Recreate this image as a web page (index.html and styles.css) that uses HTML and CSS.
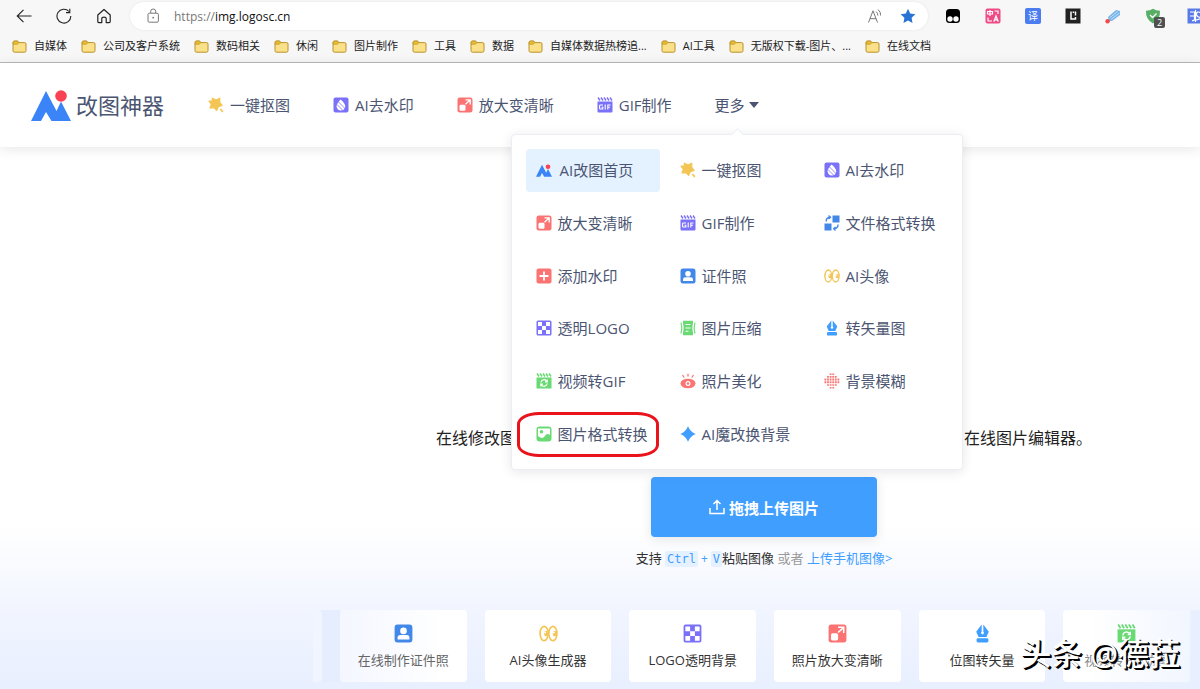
FILE: index.html
```html
<!DOCTYPE html>
<html lang="zh-CN">
<head>
<meta charset="utf-8">
<title>改图神器</title>
<link rel="stylesheet" href="styles.css">
</head>
<body>
<svg class="sprite" aria-hidden="true">
  <symbol id="folder" viewBox="0 0 15 13"><path d="M1 2.6Q1 1 2.5 1H5.4L7 2.6H12.6Q14 2.6 14 4V10.6Q14 12.2 12.5 12.2H2.5Q1 12.2 1 10.6Z" fill="#fbe08a" stroke="#b8922a"/><path d="M1.2 4.2H5.2L7 2.6L5.6 1.2H2.6Q1.2 1.2 1.2 2.6Z" fill="#e8bd2e" stroke="#b8922a" stroke-width=".7"/></symbol>
  <symbol id="logo" viewBox="0 0 40 31"><path d="M0 31 15 1 25.500 21 30 11.500 40 31H20.500L15 22 10 31Z" fill="#3a84f7"/><circle cx="30" cy="6" r="5.800" fill="#fb4254"/></symbol>
  <symbol id="magic" viewBox="0 0 16 16"><path d="M4.400 1.200 8 3 11.800 1.200 11.600 5.200 14.200 8.500 10.400 9.600 8.600 13.400 6.200 10.800 2 11 3.400 7.200 1 4.200 4.200 4.200Z" fill="#f3c554" stroke="#f3c554" stroke-width="1.200" stroke-linejoin="round"/><path d="m12.300 12 2.500 2.800" stroke="#f3c554" stroke-width="1.800"/></symbol>
  <symbol id="drop" viewBox="0 0 16 16"><rect x=".5" y=".5" width="15" height="15" rx="2" fill="#7b70f8"/><path d="M7.500 2.500C5 5.500 3.600 7.200 3.600 9.200A4.300 4.300 0 0 0 12.200 9.200C12.200 7 10 4.500 7.500 2.500Z" fill="#fff"/><path d="m5.500 5 7 7M4 7.500l6 6" stroke="#7b70f8" stroke-width=".8"/></symbol>
  <symbol id="enlarge" viewBox="0 0 16 16"><rect x=".5" y=".5" width="15" height="15" rx="2.200" fill="#fb7373"/><rect x="2.500" y="7.800" width="6" height="6" rx="1.400" fill="#fff"/><path d="M8.500 2.800H13.200V7.500M13 3 8.500 7.200" fill="none" stroke="#fff" stroke-width="1.300"/></symbol>
  <symbol id="gif" viewBox="0 0 16 16"><path d="M.5 4.500H15.500V14.500Q15.500 15.500 14.500 15.500H1.500Q.5 15.500 .5 14.500Z" fill="#7b70f8"/><path d="M1 .5 3 3.500M4 .5 6 3.500M7 .5 9 3.500M10 .5 12 3.500M13 .5 15 3.500" stroke="#7b70f8" stroke-width="1.400"/><path d="M6 8H3.300Q2.600 8 2.600 8.700V11.300Q2.600 12 3.300 12H5.800V10.200H4.600M8.200 7.500V12.500M10.800 12.500V8H13.500M10.800 10.200H13" fill="none" stroke="#fff" stroke-width="1.100"/></symbol>
  <symbol id="convert" viewBox="0 0 16 16"><path d="M8.500 .5H15.500V7.500H8.500ZM.5 8.500H7.500V15.500H.5Z" fill="#4288e8"/><path d="M2.200 6.500Q2 2.500 6 2.200M4.500 .6 6.500 2.200 4.500 4M14 9.500Q14 13.500 10.200 13.800M11.500 12 9.700 13.800 11.500 15.400" fill="none" stroke="#4288e8" stroke-width="1.400"/></symbol>
  <symbol id="plus" viewBox="0 0 16 16"><rect x=".5" y=".5" width="15" height="15" rx="2" fill="#fb7373"/><path d="M8 3.500v9M3.500 8h9" stroke="#fff" stroke-width="1.800"/></symbol>
  <symbol id="person" viewBox="0 0 16 16"><rect x=".5" y=".5" width="15" height="15" rx="2.500" fill="#4288e8"/><circle cx="8" cy="5.800" r="2.800" fill="#fff"/><path d="M3 13V11.500Q3 9.300 5.400 9.300H10.600Q13 9.300 13 11.500V13Z" fill="#fff"/></symbol>
  <symbol id="eyes" viewBox="0 0 16 16"><g fill="none" stroke="#f3c554" stroke-width="1.400"><ellipse cx="4.300" cy="8" rx="3.400" ry="6"/><ellipse cx="11.700" cy="8" rx="3.400" ry="6"/></g><ellipse cx="5.900" cy="8" rx="1.600" ry="2.300" fill="#f3c554"/><ellipse cx="13.200" cy="8" rx="1.600" ry="2.300" fill="#f3c554"/><circle cx="5.200" cy="7.200" r=".8" fill="#fff"/><circle cx="12.500" cy="7.200" r=".8" fill="#fff"/></symbol>
  <symbol id="checker" viewBox="0 0 16 16"><rect x=".5" y=".5" width="15" height="15" rx="1.500" fill="#7b70f8"/><path d="M2 2h4v4H2ZM10 2h4v4h-4ZM6 6h4v4H6ZM2 10h4v4H2ZM10 10h4v4h-4Z" fill="#fff"/></symbol>
  <symbol id="compress" viewBox="0 0 16 16"><path d="M3 .8H13V2.500Q11.600 8 13 13.500V15.200H3V13.500Q4.400 8 3 2.500Z" fill="#68d973"/><path d="M5.500 4.500h5M5.500 8h5M5.500 11.200h3" stroke="#fff" stroke-width="1.100"/><path d="M1 2.500Q2.800 8 1 13.500M15 2.500Q13.200 8 15 13.500" fill="none" stroke="#68d973" stroke-width="1.100"/></symbol>
  <symbol id="pen" viewBox="0 0 16 16"><path d="M7.300 .5V6.500A1.200 1.200 0 1 0 8.700 6.500V.5L13.300 6.500 11.300 11H4.700L2.700 6.500Z" fill="#409eff"/><rect x="3" y="12" width="10" height="3.600" rx="1.200" fill="#409eff"/></symbol>
  <symbol id="video" viewBox="0 0 16 16"><path d="M.5 4.500H15.500V15.500H.5Z" fill="#68d973"/><path d="M1 .5 3 3.500M4 .5 6 3.500M7 .5 9 3.500M10 .5 12 3.500M13 .5 15 3.500" stroke="#68d973" stroke-width="1.500"/><path d="M4.800 9.500A3.300 3.300 0 0 1 10.500 7.800M11.200 10.500A3.300 3.300 0 0 1 5.500 12.200M11.200 6.500V8.800H9M4.800 13.500V11.200H7" fill="none" stroke="#fff" stroke-width="1.200"/></symbol>
  <symbol id="eye" viewBox="0 0 16 16"><ellipse cx="8" cy="10.500" rx="7.500" ry="4.800" fill="#fb7373"/><circle cx="8" cy="10.500" r="2.500" fill="#fff"/><circle cx="8" cy="10.500" r="1.200" fill="#fb7373"/><path d="M8 .8V3.500M2.500 2 4.200 4.500M13.500 2 11.800 4.500" stroke="#fb7373" stroke-width="1.300"/></symbol>
  <symbol id="mosaic" viewBox="0 0 16 16"><g stroke="#fb7373" stroke-width="1.600" stroke-dasharray="1.800 .8" fill="none"><path d="M5.700 1.200H10.500"/><path d="M3.100 3.900H13"/><path d="M.5 6.600H16M.5 9.300H16" stroke-width="2"/><path d="M3.100 12H13"/><path d="M5.700 14.700H10.500"/></g></symbol>
  <symbol id="picture" viewBox="0 0 16 16"><rect x=".5" y=".5" width="15" height="15" rx="3" fill="#68d973"/><path d="M2 2.500H14V9Q11 6.500 8.500 10.500Q6.500 13.500 2 10Z" fill="#fff"/><circle cx="5.500" cy="5.800" r="1.800" fill="#68d973"/></symbol>
  <symbol id="spark" viewBox="0 0 16 16"><path d="M8 .3Q10.200 5.800 15.700 8Q10.200 10.200 8 15.700Q5.800 10.200 .3 8Q5.800 5.800 8 .3Z" fill="#409eff"/></symbol>
</svg>

<div class="browser">
  <div class="toolbar">
    <div class="controls">
      <button class="tool" aria-label="返回"><svg viewBox="0 0 16 16"><path d="M15.500 8H1.500M7.500 1.800 1.200 8 7.500 14.200" fill="none" stroke="#222" stroke-width="1.100"/></svg></button>
      <button class="tool" aria-label="刷新"><svg viewBox="0 0 16 16"><path d="M14.800 8A6.900 6.900 0 1 1 13 3.500M13.800 .8V4.600H10" fill="none" stroke="#222" stroke-width="1.100"/></svg></button>
      <button class="tool" aria-label="主页"><svg viewBox="0 0 16 16"><path d="M1.800 7 8 1.500 14.200 7V13.500Q14.200 14.600 13.200 14.600H10.200V10.400Q10.200 9.200 8 9.200T5.800 10.400V14.600H2.800Q1.800 14.600 1.800 13.500Z" fill="none" stroke="#222" stroke-width="1.200" stroke-linejoin="round"/></svg></button>
    </div>
    <div class="address">
      <svg class="lock" viewBox="0 0 14 16"><rect x="2" y="5.200" width="10.400" height="9" rx="1.300" fill="none" stroke="#777"/><path d="M4.700 5V3.200Q4.700 1 7.200 1T9.700 3.200V5" fill="none" stroke="#777"/><circle cx="7.200" cy="9.700" r=".9" fill="#777"/></svg>
      <label class="scheme" for="url">https://</label><input id="url" class="url" type="text" value="img.logosc.cn">
      <button class="tool" aria-label="朗读"><svg viewBox="0 0 16 16"><path d="M1.500 14.500 6 2.800 10.500 14.500M3 10.700H9M9 3.500Q11 5 10.800 7.500M11 1.500Q14 4 13.600 7.500" fill="none" stroke="#777"/></svg></button>
      <button class="tool" aria-label="收藏"><svg viewBox="0 0 16 16"><path d="m8 .8 2.200 4.700 5.200.7-3.800 3.600.9 5.200L8 12.500 3.500 15l.9-5.200L.6 6.200l5.200-.7Z" fill="#2a73d6"/></svg></button>
    </div>
    <div class="extensions">
      <button class="tool" aria-label="脚本"><svg viewBox="0 0 16 16"><rect x="1" y="1" width="14" height="14" rx="3.500" fill="#000"/><circle cx="5" cy="11" r="2.700" fill="#fff"/><circle cx="11" cy="11" r="2.700" fill="#fff"/></svg></button>
      <button class="tool" aria-label="双语翻译"><svg viewBox="0 0 16 16"><rect x=".5" y=".5" width="15" height="15" rx="2" fill="#ed4a86"/><path d="M2.500 3.500H7.500V6H2.500ZM5 2V8M9.500 3H13V6M3 9.500V13H7M8.800 13.800 11 8 13.300 13.800M9.700 11.800H12.500" fill="none" stroke="#fff" stroke-width="1.200"/></svg></button>
      <button class="tool tile">译</button>
      <button class="tool" aria-label="阅读"><svg viewBox="0 0 16 16"><path d="M.5 .5H15.500V15.500H.5Z" fill="#222"/><path d="M6 3.500V11H10.500V9M10.500 3.500V7.500M8.400 3.500V5" fill="none" stroke="#fff" stroke-width="1.500"/></svg></button>
      <button class="tool" aria-label="铅笔"><svg viewBox="0 0 16 16"><path d="m3 9 8-7 4 1v4l-8 6H4Z" fill="#76b4ea"/><path d="m4.500 10 8-6.500M6 11.500 14.500 5" stroke="#d5ebfb" stroke-width=".8"/><circle cx="2.600" cy="13.300" r="2.200" fill="#f24848"/></svg></button>
      <button class="tool guard" aria-label="防护"><svg viewBox="0 0 16 16"><path d="M1 2.800Q5 2.800 8 .8Q11 2.800 15 2.800Q15.500 11.500 8 15.500Q.5 11.500 1 2.800Z" fill="#58ae65"/><path d="m5 7 2.500 2.500 4-4" fill="none" stroke="#fff" stroke-width="1.300"/></svg><span class="count">2</span></button>
      <button class="tool" aria-label="JS"><svg viewBox="0 0 16 16"><path d="M.5 .5H15.500V15.500H.5Z" fill="#587be8"/><path d="M3 4H7.500V11Q7.500 13 5 12.500M3 8H7M13.500 4.500Q9.500 3 9.500 6T13.300 9.500T9 12M8.500 2V14" fill="none" stroke="#fff" stroke-width="1.200"/></svg></button>
    </div>
  </div>
  <nav class="bookmarks" aria-label="书签">
    <a href="#"><svg><use href="#folder"/></svg>自媒体</a>
    <a href="#"><svg><use href="#folder"/></svg>公司及客户系统</a>
    <a href="#"><svg><use href="#folder"/></svg>数码相关</a>
    <a href="#"><svg><use href="#folder"/></svg>休闲</a>
    <a href="#"><svg><use href="#folder"/></svg>图片制作</a>
    <a href="#"><svg><use href="#folder"/></svg>工具</a>
    <a href="#"><svg><use href="#folder"/></svg>数据</a>
    <a href="#"><svg><use href="#folder"/></svg>自媒体数据热榜追...</a>
    <a href="#"><svg><use href="#folder"/></svg>AI工具</a>
    <a href="#"><svg><use href="#folder"/></svg>无版权下载-图片、...</a>
    <a href="#"><svg><use href="#folder"/></svg>在线文档</a>
  </nav>
</div>

<header class="site-header">
  <a class="brand" href="#"><svg><use href="#logo"/></svg>改图神器</a>
  <nav class="main-nav">
    <a class="entry" href="#"><svg><use href="#magic"/></svg>一键抠图</a>
    <a class="entry" href="#"><svg><use href="#drop"/></svg>AI去水印</a>
    <a class="entry" href="#"><svg><use href="#enlarge"/></svg>放大变清晰</a>
    <a class="entry" href="#"><svg><use href="#gif"/></svg>GIF制作</a>
    <div class="more">
      <button class="more-button" aria-expanded="true">更多<span class="caret"></span></button>
      <div class="menu">
        <a class="entry active" href="#"><svg><use href="#logo"/></svg>AI改图首页</a>
        <a class="entry" href="#"><svg><use href="#magic"/></svg>一键抠图</a>
        <a class="entry" href="#"><svg><use href="#drop"/></svg>AI去水印</a>
        <a class="entry" href="#"><svg><use href="#enlarge"/></svg>放大变清晰</a>
        <a class="entry" href="#"><svg><use href="#gif"/></svg>GIF制作</a>
        <a class="entry" href="#"><svg><use href="#convert"/></svg>文件格式转换</a>
        <a class="entry" href="#"><svg><use href="#plus"/></svg>添加水印</a>
        <a class="entry" href="#"><svg><use href="#person"/></svg>证件照</a>
        <a class="entry" href="#"><svg><use href="#eyes"/></svg>AI头像</a>
        <a class="entry" href="#"><svg><use href="#checker"/></svg>透明LOGO</a>
        <a class="entry" href="#"><svg><use href="#compress"/></svg>图片压缩</a>
        <a class="entry" href="#"><svg><use href="#pen"/></svg>转矢量图</a>
        <a class="entry" href="#"><svg><use href="#video"/></svg>视频转GIF</a>
        <a class="entry" href="#"><svg><use href="#eye"/></svg>照片美化</a>
        <a class="entry" href="#"><svg><use href="#mosaic"/></svg>背景模糊</a>
        <a class="entry circled" href="#"><svg><use href="#picture"/></svg>图片格式转换</a>
        <a class="entry" href="#"><svg><use href="#spark"/></svg>AI魔改换背景</a>
      </div>
    </div>
  </nav>
</header>

<main class="hero">
  <div class="center">
    <p class="intro"><span>在线修改图</span><span>在线图片编辑器。</span></p>
    <button class="upload"><svg viewBox="0 0 16 16"><path d="M1 9V14.500H15V9M8 11V1.500M4.500 5 8 1.500 11.500 5" fill="none" stroke="#fff" stroke-width="1.500"/></svg>拖拽上传图片</button>
    <p class="hint">支持 <kbd>Ctrl</kbd><span class="join">+</span><kbd>V</kbd>粘贴图像 <span class="or">或者</span> <a href="#">上传手机图像&gt;</a></p>
  </div>
  <div class="carousel">
    <div class="sliver"></div>
    <div class="cards">
      <a class="card fade-left" href="#"><svg><use href="#person"/></svg>在线制作证件照</a>
      <a class="card" href="#"><svg><use href="#eyes"/></svg>AI头像生成器</a>
      <a class="card" href="#"><svg><use href="#checker"/></svg>LOGO透明背景</a>
      <a class="card" href="#"><svg><use href="#enlarge"/></svg>照片放大变清晰</a>
      <a class="card" href="#"><svg><use href="#pen"/></svg>位图转矢量</a>
      <a class="card fade-right" href="#"><svg><use href="#video"/></svg>视频转GIF动图</a>
    </div>
  </div>
</main>
<div class="watermark">头条 @德菈</div>
</body>
</html>
```
FILE: styles.css
```css
* { box-sizing: border-box; }
body {
  margin: 0;
  min-height: 100vh;
  display: flex;
  flex-direction: column;
  position: relative;
  overflow: hidden;
  background: #fff;
  color: #333;
  font-family: "Open Sans", "Noto Sans CJK SC", sans-serif;
  font-size: 15px;
}
a { color: inherit; text-decoration: none; }
button { border: 0; padding: 0; background: none; font: inherit; color: inherit; }
p { margin: 0; }
.sprite { position: absolute; width: 0; height: 0; }

.browser { background: #f7f7f7; border-bottom: 1px solid #b8b8b8; }
.toolbar { display: flex; align-items: center; height: 32px; overflow: hidden; }
.controls { display: flex; gap: 24px; padding: 0 18px 0 16px; }
.tool { flex: none; width: 16px; height: 16px; position: relative; }
.tool svg { display: block; width: 16px; height: 16px; }
.address {
  flex: 1;
  display: flex;
  align-items: center;
  height: 28px;
  padding: 0 12px 0 16px;
  border-radius: 14px;
  background: #fff;
  box-shadow: 0 0 2px #ddd;
  font-size: 12px;
}
.lock { width: 14px; height: 16px; margin-right: 14px; }
.scheme { color: #777; }
.url { flex: 1; min-width: 0; border: 0; padding: 0; outline: 0; background: none; font: inherit; color: #111; }
.address .tool + .tool { margin-left: 17px; }
.extensions { display: flex; gap: 24px; padding-left: 17px; margin-right: -3px; }
.tile { border-radius: 2px; background: #4c7df0; color: #fff; font-size: 10px; line-height: 16px; }
.count {
  position: absolute;
  left: 9px;
  top: 9px;
  width: 11px;
  height: 11px;
  border-radius: 2px;
  background: #505050;
  color: #fff;
  font-size: 9px;
  line-height: 11px;
}
.guard { margin-right: 2px; }
.bookmarks { display: flex; gap: 14px; height: 30px; padding: 0 12px; align-items: center; font-size: 11px; color: #222; white-space: nowrap; }
.bookmarks a { display: flex; align-items: center; gap: 7px; line-height: 16px; padding-bottom: 2px; }
.bookmarks svg { width: 15px; height: 13px; }

.site-header {
  display: flex;
  align-items: center;
  height: 84px;
  padding-left: 31px;
  color: #4b5572;
  background: #fff;
  box-shadow: 0 2px 12px rgba(0, 0, 0, .1);
  position: relative;
  z-index: 2;
}
.brand { display: flex; align-items: center; gap: 5px; font-size: 22px; line-height: 32px; }
.brand svg { width: 40px; height: 31px; }
.main-nav { display: flex; align-items: center; gap: 43px; margin-left: 44px; }
.entry { display: flex; align-items: center; gap: 6px; line-height: 22px; white-space: nowrap; }
.entry svg { width: 16px; height: 16px; flex: none; }
.more { position: relative; }
.more-button { display: flex; align-items: center; gap: 4px; line-height: 22px; }
.caret { border: 5px solid transparent; border-top: 6px solid #4b5572; border-bottom: 0; }
.menu {
  position: absolute;
  top: 40px;
  left: 50%;
  transform: translateX(-50%);
  display: grid;
  grid-template-columns: repeat(3, 134px);
  grid-auto-rows: 1fr;
  gap: 10px;
  min-height: 336px;
  padding: 14px;
  border: 1px solid #ebeef5;
  border-radius: 4px;
  background: #fff;
  box-shadow: 0 2px 12px rgba(0, 0, 0, .1);
}
.menu::before {
  content: "";
  position: absolute;
  top: -5px;
  left: 50%;
  width: 8px;
  height: 8px;
  margin-left: -4px;
  border: 1px solid #ebeef5;
  border-right: 0;
  border-bottom: 0;
  background: #fff;
  transform: rotate(45deg);
}
.menu .entry { padding-left: 10px; border-radius: 4px; position: relative; }
.menu .active { gap: 8px; background: #e4f1ff; }
.menu .active svg { height: 13px; }
.circled::after {
  content: "";
  position: absolute;
  inset: 0 1px -2px -9px;
  border: 3px solid #e8131b;
  border-radius: 22px / 12px;
}

.hero {
  flex: 1;
  display: flex;
  flex-direction: column;
  justify-content: flex-end;
  padding-bottom: 7px;
  background: linear-gradient(to bottom, #fff 70%, #f0f4ff 87%, #e8effe);
}
.center { display: flex; flex-direction: column; align-items: center; padding-left: 328px; }
.intro { display: flex; justify-content: space-between; width: 656px; font-size: 16px; line-height: 24px; color: #222; }
.upload {
  display: flex;
  align-items: center;
  justify-content: center;
  gap: 4px;
  width: 226px;
  height: 60px;
  margin: 27px 0 11px;
  border-radius: 4px;
  background: #409eff;
  box-shadow: 0 2px 12px rgba(0, 0, 0, .1);
  color: #fff;
  font-weight: 700;
}
.upload svg { width: 16px; height: 16px; }
.hint { font-size: 13px; line-height: 20px; }
.hint kbd { padding: 1px 2px; border-radius: 2px; background: #e6f1ff; color: #409eff; font: 12px "DejaVu Sans Mono", monospace; }
.join { margin: 0 3px; color: #409eff; font-size: 12px; }
.or { color: #999; }
.hint a { color: #409eff; }

.carousel { display: flex; gap: 18px; margin: 41px 0 0 313px; background: linear-gradient(to right, #e6edfe 27px, transparent 28px 877px, #e8effe 878px); }
.sliver { width: 9px; border-radius: 0 4px 4px 0; background: #f1f5ff; }
.cards { flex: 1; display: flex; gap: 18px; padding-right: 10px; }
.card {
  flex: 1;
  display: flex;
  flex-direction: column;
  align-items: center;
  gap: 7px;
  height: 72px;
  padding-top: 14px;
  border-radius: 4px;
  background: #fff;
  font-size: 13px;
  line-height: 20px;
  white-space: nowrap;
}
.card svg { width: 19px; height: 19px; }
.fade-left { background: linear-gradient(to right, #f4f7ff, #fff 80%); color: #666; }
.fade-right { background: linear-gradient(to right, #fff 20%, #f2f6ff); color: #888; }

.watermark {
  position: absolute;
  right: 20px;
  bottom: 16px;
  z-index: 3;
  color: #fff;
  font-size: 31px;
  line-height: 40px;
  font-weight: 500;
  text-shadow: 1px 1px 0 #000, 2px 2px 0 #000;
}
```
